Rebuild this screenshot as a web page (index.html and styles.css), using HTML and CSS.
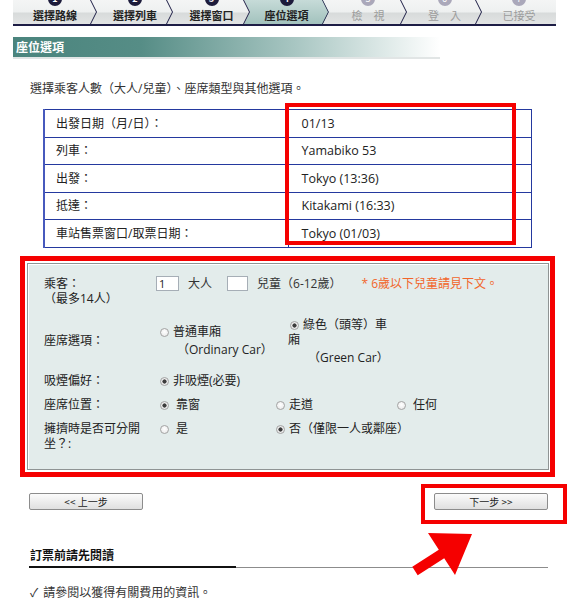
FILE: index.html
```html
<!DOCTYPE html>
<html lang="zh-Hant">

<head>
  <meta charset="UTF-8">
  <meta name="viewport" content="width=device-width, initial-scale=1.0">
  <title>座位選項</title>
  <link rel="stylesheet" href="styles.css">
</head>

<body>
  <div class="page">

    <!-- progress steps -->
    <ol class="steps">
      <li class="step s1 done"><span class="num">1</span>選擇路線<svg class="chev" viewBox="0 0 7 24"><path d="M0.5 0 L6.5 12 L0.5 24"/></svg></li>
      <li class="step s2 done"><span class="num">2</span>選擇列車<svg class="chev" viewBox="0 0 7 24"><path d="M0.5 0 L6.5 12 L0.5 24"/></svg></li>
      <li class="step s3 done"><span class="num">3</span>選擇窗口<svg class="chev" viewBox="0 0 7 24"><path d="M0.5 0 L6.5 12 L0.5 24"/></svg></li>
      <li class="step s4 active"><span class="num">4</span>座位選項<svg class="chev" viewBox="0 0 7 24"><path d="M0.5 0 L6.5 12 L0.5 24"/></svg></li>
      <li class="step s5 todo"><span class="num">5</span>檢　視<svg class="chev" viewBox="0 0 7 24"><path d="M0.5 0 L6.5 12 L0.5 24"/></svg></li>
      <li class="step s6 todo"><span class="num">6</span>登　入<svg class="chev" viewBox="0 0 7 24"><path d="M0.5 0 L6.5 12 L0.5 24"/></svg></li>
      <li class="step s7 todo"><span class="num">7</span>已接受</li>
    </ol>

    <h2 class="section-bar">座位選項</h2>

    <p class="intro">選擇乘客人數（大人/兒童）、座席類型與其他選項。</p>

    <div class="summary">
      <table class="trip">
        <tr><th>出發日期（月/日）：</th><td>01/13</td></tr>
        <tr><th>列車：</th><td>Yamabiko 53</td></tr>
        <tr><th>出發：</th><td>Tokyo (13:36)</td></tr>
        <tr><th>抵達：</th><td>Kitakami (16:33)</td></tr>
        <tr><th>車站售票窗口/取票日期：</th><td>Tokyo (01/03)</td></tr>
      </table>
      <div class="mark values-mark"></div>
    </div>

    <div class="seat-form">
      <div class="options">

        <div class="frow pax-row">
          <div class="flabel">乘客：<br>（最多14人）</div>
          <div class="pax">
            <input class="count adult" type="text" value="1">
            <span class="pax-lbl">大人</span>
            <input class="count child" type="text" value="">
            <span class="pax-lbl">兒童（6-12歲）</span>
            <span class="note">* 6歲以下兒童請見下文。</span>
          </div>
        </div>

        <div class="frow car-row">
          <div class="flabel">座席選項：</div>
          <div class="cars">
            <label class="opt ordinary"><input type="radio" name="car">普通車廂<span class="car-en">（Ordinary Car）</span></label>
            <label class="opt green"><input type="radio" name="car" checked>綠色（頭等）車廂<span class="car-en">（Green Car）</span></label>
          </div>
        </div>

        <div class="frow smoke-row">
          <div class="flabel">吸煙偏好：</div>
          <div class="choices">
            <label class="opt"><input type="radio" name="smoke" checked>非吸煙(必要)</label>
          </div>
        </div>

        <div class="frow">
          <div class="flabel">座席位置：</div>
          <div class="choices three">
            <label class="opt"><input type="radio" name="pos" checked> 靠窗</label>
            <label class="opt"><input type="radio" name="pos">走道</label>
            <label class="opt"><input type="radio" name="pos"> 任何</label>
          </div>
        </div>

        <div class="frow">
          <div class="flabel">擁擠時是否可分開坐？:</div>
          <div class="choices three">
            <label class="opt"><input type="radio" name="split"> 是</label>
            <label class="opt"><input type="radio" name="split" checked>否（僅限一人或鄰座）</label>
          </div>
        </div>

      </div>
    </div>

    <div class="nav-row">
      <button class="btn prev">&lt;&lt; 上一步</button>
      <div class="next-mark">
        <button class="btn next">下一步 &gt;&gt;</button>
      </div>
    </div>

    <div class="notice">
      <h3>訂票前請先閱讀</h3>
    </div>
    <p class="tip"><span class="check">✓</span>請參閱以獲得有關費用的資訊。</p>

    <svg class="arrow" viewBox="0 0 66 50" width="66" height="50">
      <polygon points="62,6 18,5 28.8,21.8 2.3,38.8 7.7,47.2 34.2,30.2 45,47" fill="#f50000"/>
    </svg>

  </div>
</body>

</html>
```

FILE: styles.css
```css
/* page base */
body {
  margin: 0;
  padding: 0;
  background: #fff;
  color: #333;
  font-family: "Open Sans", "Noto Sans CJK TC", sans-serif;
  font-size: 12px;
  line-height: 15px;
}

.page {
  position: relative;
  width: 579px;
  height: 600px;
  overflow: hidden;
}

/* steps bar */
.steps {
  display: flex;
  list-style: none;
  margin: 0 0 0 13px;
  padding: 0;
  width: 543px;
  height: 24px;
  background: linear-gradient(#f4f5f5 0, #eef0f0 48%, #d8dbdb 56%, #e2e4e4 100%);
  border-bottom: 2px solid #1d1d45;
}

.step {
  position: relative;
  flex: none;
  text-align: center;
  font-family: "Noto Sans CJK TC", sans-serif;
  font-weight: bold;
  font-size: 11px;
  line-height: 13px;
  color: #222;
}

.s1 { width: 84px; }
.s2 { width: 76px; }
.s3 { width: 77px; }
.s4 { width: 85px; margin-left: -6px; }
.s5 { width: 78px; }
.s6 { width: 75px; }
.s7 { width: 74px; }

.step .num {
  display: block;
  width: 14px;
  height: 14px;
  margin: -8px auto 3px;
  border-radius: 50%;
  background: #1c1b3b;
  color: #fff;
  font-size: 9px;
  line-height: 14px;
}

.step.todo {
  color: #9c9c9c;
  font-weight: normal;
}

.step.todo .num {
  background: #aaa8ba;
}

.step.active {
  background: linear-gradient(#c6dbd8, #a2c2bd);
  clip-path: polygon(0 0, calc(100% - 6px) 0, 100% 50%, calc(100% - 6px) 100%, 0 100%, 6px 50%);
}

.chev {
  position: absolute;
  top: 0;
  right: 0;
  width: 7px;
  height: 24px;
  z-index: 2;
}

.chev path {
  fill: none;
  stroke: #1d1d45;
  stroke-width: 1;
}

/* section header */
.section-bar {
  margin: 11px 0 0 13px;
  padding-left: 3px;
  width: 424px;
  height: 20px;
  font-family: "Noto Sans CJK TC", sans-serif;
  font-size: 12px;
  line-height: 20px;
  font-weight: bold;
  color: #fff;
  background: linear-gradient(to right, #4a847d 0, #568d86 30%, #a8c6c2 66%, #fff 100%);
  box-shadow: 0 2px 0 #e1e5e5;
}

.intro {
  margin: 24px 0 0 30px;
}

/* trip summary */
.summary {
  position: relative;
  margin: 13px 0 0 43px;
  width: 489px;
}

.trip {
  width: 489px;
  border-collapse: collapse;
  table-layout: fixed;
}

.trip th,
.trip td {
  height: 26.5px;
  padding: 0;
  border: 1px solid #24399f;
  text-align: left;
  font-weight: normal;
  color: #222;
}

.trip th {
  box-sizing: border-box;
  width: 244px;
  padding-left: 11px;
  border-left: 2px solid #4759bd;
}

.trip td {
  padding-left: 13px;
  font-size: 12.5px;
}

.mark {
  position: absolute;
  box-sizing: border-box;
  border: 4px solid #f50000;
}

.values-mark {
  left: 242px;
  top: -6px;
  width: 231px;
  height: 142px;
}

/* seat form */
.seat-form {
  margin: 8px 0 0 20px;
  width: 535px;
  box-sizing: border-box;
  border: 5px solid #f50000;
  padding: 2px 1px 2px 2px;
}

.options {
  border: 1px solid #8f9494;
  box-shadow: inset 1px 1px 0 #fff;
  background: #e3eceb;
  padding: 12px 0 18px 16px;
}

.frow {
  display: grid;
  grid-template-columns: 104px auto;
  column-gap: 8px;
  align-items: start;
  margin-top: 9px;
}

.frow.pax-row {
  margin-top: 0;
}

.frow.car-row {
  margin-top: 11px;
  align-items: center;
}

.frow.smoke-row {
  margin-top: 8px;
}

.flabel {
  color: #222;
}

.pax {
  display: flex;
  align-items: center;
}

.count {
  box-sizing: border-box;
  height: 15px;
  margin: 0;
  padding: 0 2px;
  border: 1px solid #a6aeb6;
  background: #fff;
  font-family: "Open Sans", sans-serif;
  font-size: 11px;
  line-height: 13px;
  color: #222;
}

.count.adult { width: 23px; }
.count.child { width: 21px; margin-left: 15px; }

.pax-lbl {
  margin-left: 9px;
}

.note {
  margin-left: 20px;
  color: #f2652a;
}

.cars {
  display: flex;
  align-items: center;
}

.opt {
  display: block;
  color: #222;
}

.cars .ordinary { width: 132px; }
.cars .green { width: 104px; }

.car-en {
  display: block;
  margin-top: 3px;
}

.ordinary .car-en { padding-left: 21px; }
.green .car-en { padding-left: 20px; }

.choices {
  display: flex;
}

.choices .opt {
  flex: none;
  white-space: nowrap;
}

.choices.three .opt:nth-child(1) { width: 116px; }
.choices.three .opt:nth-child(2) { width: 121px; }

/* radio buttons */
input[type="radio"] {
  appearance: none;
  -webkit-appearance: none;
  box-sizing: border-box;
  width: 9px;
  height: 9px;
  margin: 0 4px 0 4px;
  border: 1px solid #a3a3a3;
  border-radius: 50%;
  background: radial-gradient(circle at 50% 40%, #ffffff 0, #e6e6e6 100%);
  vertical-align: -1px;
}

input[type="radio"]:checked {
  background: radial-gradient(circle, #3c3c3c 0, #3c3c3c 1.8px, #f0f0f0 2.4px, #e2e2e2 100%);
}

.green input[type="radio"] {
  margin-left: 2px;
}

/* buttons */
.nav-row {
  display: flex;
  justify-content: space-between;
  align-items: flex-start;
  margin: 7px 12px 0 29px;
}

.btn {
  width: 114px;
  height: 17px;
  padding: 0;
  border: 1px solid #8c8c8c;
  border-radius: 2px;
  background: linear-gradient(#fbfbfb, #e0e0e0);
  font-family: "Noto Sans CJK TC", sans-serif;
  font-size: 10px;
  line-height: 15px;
  color: #222;
}

.btn.prev {
  margin-top: 9px;
}

.next-mark {
  border: 4px solid #f50000;
  padding: 5px 15px 10px 9px;
}

.next-mark .btn {
  display: block;
}

/* notice */
.notice {
  margin: 23px 31px 0 29px;
  border-bottom: 1px solid #8c8c8c;
}

.notice h3 {
  width: 206px;
  margin: 0 0 -1px;
  padding: 0 0 4px 1px;
  border-bottom: 2px solid #111;
  font-family: "Noto Sans CJK TC", sans-serif;
  font-size: 12px;
  line-height: 15px;
  color: #111;
}

.tip {
  margin: 17px 0 0 30px;
}

.tip .check {
  margin-right: 5px;
}

.arrow {
  position: absolute;
  left: 410px;
  top: 528px;
}
```
